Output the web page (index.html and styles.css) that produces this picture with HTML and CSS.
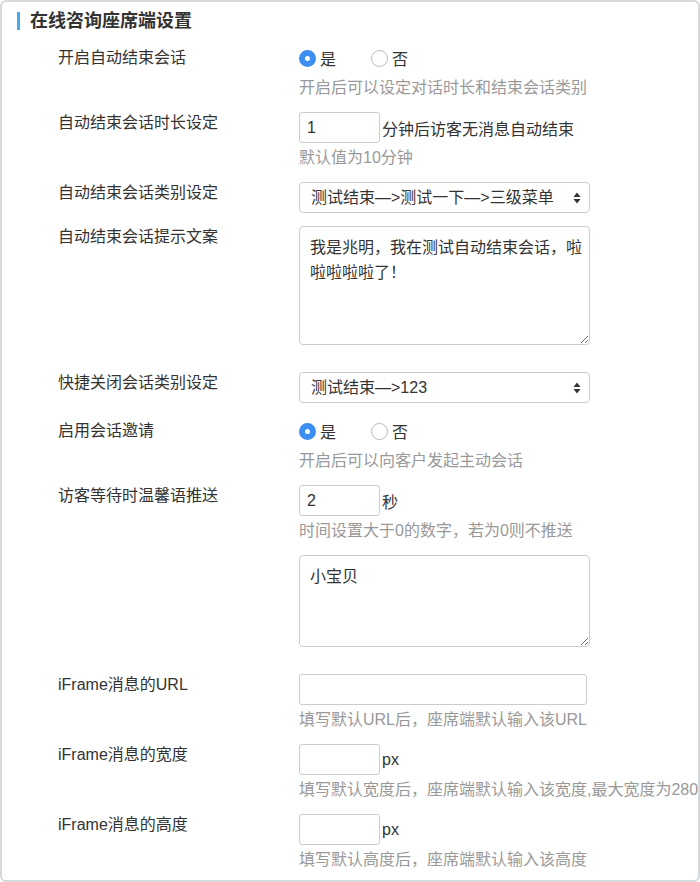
FILE: index.html
```html
<!DOCTYPE html>
<html lang="zh">

<head>
    <meta charset="UTF-8">
    <meta name="viewport" content="width=device-width, initial-scale=1.0">
    <title>在线咨询座席端设置</title>
    <link rel="stylesheet" href="styles.css">
</head>

<body>
    <div class="panel">
        <h2 class="panel-title">在线咨询座席端设置</h2>

        <div class="row row-radio">
            <div class="label">开启自动结束会话</div>
            <div class="field">
                <div class="radios">
                    <label class="radio"><input type="radio" name="autoEnd" checked>是</label>
                    <label class="radio"><input type="radio" name="autoEnd">否</label>
                </div>
                <div class="hint">开启后可以设定对话时长和结束会话类别</div>
            </div>
        </div>

        <div class="row">
            <div class="label">自动结束会话时长设定</div>
            <div class="field">
                <div class="inline">
                    <input type="text" class="txt txt-short" value="1">
                    <span class="unit">分钟后访客无消息自动结束</span>
                </div>
                <div class="hint hint-input">默认值为10分钟</div>
            </div>
        </div>

        <div class="row">
            <div class="label">自动结束会话类别设定</div>
            <div class="field">
                <div class="select-wrap">
                    <select class="sel">
                        <option>测试结束—&gt;测试一下—&gt;三级菜单</option>
                    </select>
                    <span class="sel-arrow">
                        <svg width="8" height="12" viewBox="0 0 8 12">
                            <path d="M4 0.5 L7.5 5 L0.5 5 Z" fill="#333" />
                            <path d="M4 11.5 L7.5 7 L0.5 7 Z" fill="#333" />
                        </svg>
                    </span>
                </div>
            </div>
        </div>

        <div class="row">
            <div class="label">自动结束会话提示文案</div>
            <div class="field">
                <textarea class="area area-tall">我是兆明，我在测试自动结束会话，啦啦啦啦啦了！</textarea>
            </div>
        </div>

        <div class="row">
            <div class="label">快捷关闭会话类别设定</div>
            <div class="field">
                <div class="select-wrap">
                    <select class="sel">
                        <option>测试结束—&gt;123</option>
                    </select>
                    <span class="sel-arrow">
                        <svg width="8" height="12" viewBox="0 0 8 12">
                            <path d="M4 0.5 L7.5 5 L0.5 5 Z" fill="#333" />
                            <path d="M4 11.5 L7.5 7 L0.5 7 Z" fill="#333" />
                        </svg>
                    </span>
                </div>
            </div>
        </div>

        <div class="row row-radio">
            <div class="label">启用会话邀请</div>
            <div class="field">
                <div class="radios">
                    <label class="radio"><input type="radio" name="invite" checked>是</label>
                    <label class="radio"><input type="radio" name="invite">否</label>
                </div>
                <div class="hint">开启后可以向客户发起主动会话</div>
            </div>
        </div>

        <div class="row">
            <div class="label">访客等待时温馨语推送</div>
            <div class="field">
                <div class="inline">
                    <input type="text" class="txt txt-short" value="2">
                    <span class="unit">秒</span>
                </div>
                <div class="hint hint-input">时间设置大于0的数字，若为0则不推送</div>
            </div>
        </div>

        <div class="row">
            <div class="label"></div>
            <div class="field">
                <textarea class="area area-short">小宝贝</textarea>
            </div>
        </div>

        <div class="row">
            <div class="label">iFrame消息的URL</div>
            <div class="field">
                <input type="text" class="txt txt-long">
                <div class="hint hint-input">填写默认URL后，座席端默认输入该URL</div>
            </div>
        </div>

        <div class="row">
            <div class="label">iFrame消息的宽度</div>
            <div class="field">
                <div class="inline">
                    <input type="text" class="txt txt-short">
                    <span class="unit">px</span>
                </div>
                <div class="hint hint-input">填写默认宽度后，座席端默认输入该宽度,最大宽度为280</div>
            </div>
        </div>

        <div class="row">
            <div class="label">iFrame消息的高度</div>
            <div class="field">
                <div class="inline">
                    <input type="text" class="txt txt-short">
                    <span class="unit">px</span>
                </div>
                <div class="hint hint-input">填写默认高度后，座席端默认输入该高度</div>
            </div>
        </div>
    </div>
</body>

</html>
```

FILE: styles.css
```css
body {
    margin: 0px;
    padding: 0px;
    background-color: #fff;
    font-family: "Liberation Sans", "Noto Sans CJK SC", sans-serif;
    font-size: 16px;
    color: #333;
}

.panel {
    box-sizing: border-box;
    width: 700px;
    height: 882px;
    border: 2px solid #d5d9dc;
    border-radius: 6px;
    padding-left: 56px;
}

.panel-title {
    margin: 10px 0px 13px -41px;
    padding-left: 10px;
    border-left: 3px solid #47a6ec;
    font-size: 18px;
    line-height: 18px;
    font-weight: bold;
    color: #333;
}

.row {
    display: flex;
    margin-bottom: 13px;
}

.label {
    flex: 0 0 241px;
    line-height: 22px;
    color: #333;
}

.row-radio .label {
    padding-top: 4px;
}

.field {
    width: 291px;
}

.radios {
    display: flex;
    align-items: center;
    height: 30px;
}

.radio {
    display: flex;
    align-items: center;
    width: 72px;
}

.radio input {
    appearance: none;
    -webkit-appearance: none;
    box-sizing: border-box;
    width: 17px;
    height: 17px;
    margin: 0px 4px 0px 0px;
    border: 1px solid #b9b9b9;
    border-radius: 50%;
    background-color: #fff;
}

.radio input:checked {
    border: 6px solid #3c8ef3;
    background-color: #fff;
}

.hint {
    margin-top: 4px;
    line-height: 22px;
    color: #999;
    white-space: nowrap;
}

.inline {
    display: flex;
    align-items: center;
}

.unit {
    margin-left: 2px;
}

.txt {
    box-sizing: border-box;
    height: 31px;
    padding: 0px 7px;
    border: 1px solid #ccc;
    border-radius: 3px;
    font-family: "Liberation Sans", "Noto Sans CJK SC", sans-serif;
    font-size: 16px;
    color: #333;
    display: block;
}

.txt-short {
    width: 81px;
}

.txt-long {
    width: 288px;
}

.select-wrap {
    position: relative;
}

.sel {
    appearance: none;
    -webkit-appearance: none;
    box-sizing: border-box;
    display: block;
    width: 291px;
    height: 31px;
    padding: 0px 24px 0px 11px;
    border: 1px solid #ccc;
    border-radius: 4px;
    background-color: #fff;
    font-family: "Liberation Sans", "Noto Sans CJK SC", sans-serif;
    font-size: 16px;
    color: #333;
}

.sel-arrow {
    position: absolute;
    right: 9px;
    top: 10px;
    line-height: 0px;
    pointer-events: none;
}

.area {
    box-sizing: border-box;
    display: block;
    width: 291px;
    padding: 8px 4px 8px 10px;
    border: 1px solid #ccc;
    border-radius: 4px;
    font-family: "Liberation Sans", "Noto Sans CJK SC", sans-serif;
    font-size: 16px;
    line-height: 25px;
    color: #333;
    margin-bottom: 14px;
    overflow: hidden;
}

.area-tall {
    height: 119px;
}

.area-short {
    height: 92px;
}
```
